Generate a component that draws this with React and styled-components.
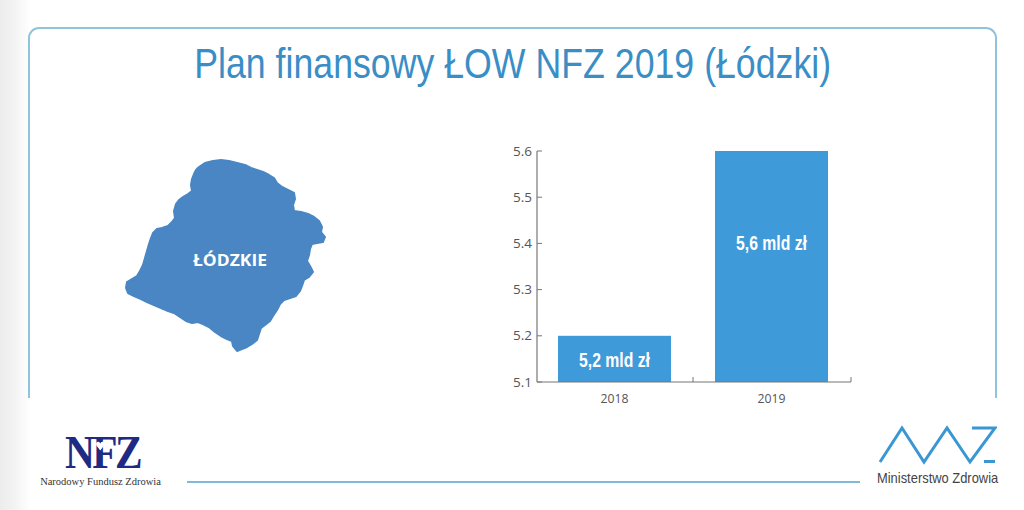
import React from 'react'
import styled, { createGlobalStyle } from 'styled-components'

const GlobalStyle = createGlobalStyle`
  html, body {
    margin: 0;
    padding: 0;
  }
  body {
    background: linear-gradient(to right, #ececec 0px, #f4f4f4 16px, #ffffff 30px);
    font-family: "Liberation Sans", Arial, sans-serif;
  }
`

const bars = [
    { year: '2018', value: 5.2, label: '5,2 mld zł' },
    { year: '2019', value: 5.6, label: '5,6 mld zł' },
]
const ticks = [5.6, 5.5, 5.4, 5.3, 5.2, 5.1]

function Chart() {
    const top = 12
    const bottom = 243
    const axisX = 42
    const scale = (bottom - top) / 0.5
    const yOf = (v) => bottom - (v - 5.1) * scale
    return (
        <ChartSvg width="365" height="272" viewBox="0 0 365 272">
            {ticks.map((t) => (
                <g key={t}>
                    <line x1={axisX} x2={axisX + 5} y1={yOf(t)} y2={yOf(t)} stroke="#777" strokeWidth="1" />
                    <text x="37" y={yOf(t) + 4.5} textAnchor="end" fontSize="12.5" fill="#555" fontFamily="'Open Sans', sans-serif" textLength="19" lengthAdjust="spacingAndGlyphs">
                        {t.toFixed(1)}
                    </text>
                </g>
            ))}
            {bars.map((b, i) => {
                const x = 63 + i * 157
                const y = yOf(b.value)
                const cx = x + 56.5
                const ly = i === 0 ? 228 : 111
                return (
                    <g key={b.year}>
                        <rect x={x} y={y} width="113" height={bottom - y} fill="#3f9ada" />
                        <text x={cx} y={ly} textAnchor="middle" fontSize="19.5" fontWeight="bold" fill="#fff" fontFamily="'Liberation Sans', Arial, sans-serif" textLength="71" lengthAdjust="spacingAndGlyphs">
                            {b.label}
                        </text>
                        <text x={cx} y="264" textAnchor="middle" fontSize="13" fill="#555" fontFamily="'Open Sans', sans-serif" textLength="28" lengthAdjust="spacingAndGlyphs">
                            {b.year}
                        </text>
                    </g>
                )
            })}
            <line x1={axisX} x2={axisX} y1={top} y2={bottom} stroke="#777" strokeWidth="1.2" />
            <line x1={axisX} x2="356" y1={bottom} y2={bottom} stroke="#777" strokeWidth="1.2" />
            <line x1="198" x2="198" y1={bottom - 5} y2={bottom} stroke="#777" strokeWidth="1" />
            <line x1="356" x2="356" y1={bottom - 5} y2={bottom} stroke="#777" strokeWidth="1" />
        </ChartSvg>
    )
}

const mapPath = 'M199,168 L205,164 L213,162 L221,161 L229,162 L237,164 L245,166 L251,169 L257,171 L263,173 L269,176 L274,179 L277,184 L282,188 L288,191 L294,194 L295,200 L293,206 L294,212 L301,213 L308,215 L314,218 L319,222 L322,228 L321,233 L325,238 L323,243 L317,244 L312,245 L310,250 L309,256 L307,262 L310,267 L313,273 L309,278 L304,281 L302,287 L300,292 L296,297 L290,299 L284,301 L280,305 L277,311 L273,317 L270,322 L265,326 L261,329 L259,335 L257,341 L252,345 L247,348 L242,350 L237,352 L233,347 L232,342 L227,340 L221,337 L215,333 L209,328 L203,325 L198,323 L192,324 L186,322 L180,318 L174,314 L168,312 L161,309 L154,306 L147,303 L141,300 L134,297 L128,294 L126,289 L127,283 L132,280 L137,277 L140,272 L143,266 L145,259 L147,252 L149,245 L151,239 L153,234 L157,230 L162,229 L168,227 L172,223 L175,219 L174,212 L176,205 L179,201 L183,198 L188,195 L192,192 L191,186 L192,180 L194,175 L196,171 Z'

function RegionMap() {
    return (
        <MapSvg width="202" height="196" viewBox="125 158 202 196">
            <path d={mapPath} fill="#4a86c4" stroke="#4a86c4" strokeWidth="2" strokeLinejoin="round" />
            <text x="230" y="267" textAnchor="middle" fontSize="15.5" fontWeight="bold" fill="#fff" fontFamily="'Open Sans', sans-serif" textLength="74" lengthAdjust="spacingAndGlyphs">
                ŁÓDZKIE
            </text>
        </MapSvg>
    )
}

function App() {
    return (
        <>
            <GlobalStyle />
            <Page>
                <Card>
                    <TitleRow>
                        <Title>Plan finansowy ŁOW NFZ 2019 (Łódzki)</Title>
                    </TitleRow>
                    <Rule />
                    <Body>
                        <RegionMap />
                        <Chart />
                    </Body>
                </Card>
                <Footer>
                    <NfzLogo>
                        <NfzMark>
                            NFZ
                            <Heart viewBox="0 0 10 9" width="10" height="10">
                                <path d="M5 9 L1 4.5 C-0.5 2.8 0.3 0.3 2.5 0.3 C3.7 0.3 4.5 1.1 5 2 C5.5 1.1 6.3 0.3 7.5 0.3 C9.7 0.3 10.5 2.8 9 4.5 Z" fill="#fff" />
                            </Heart>
                        </NfzMark>
                        <NfzName>Narodowy Fundusz Zdrowia</NfzName>
                    </NfzLogo>
                    <FooterLine />
                    <MzLogo>
                        <svg width="120" height="40" viewBox="0 0 120 40">
                            <polyline points="3,37 25,3 47,37 70,3 93,37 118,3 95,3" fill="none" stroke="#3a97d4" strokeWidth="3" strokeLinejoin="miter" />
                            <line x1="107" y1="36.5" x2="118" y2="36.5" stroke="#3a97d4" strokeWidth="3" />
                        </svg>
                        <MzName>Ministerstwo Zdrowia</MzName>
                    </MzLogo>
                </Footer>
            </Page>
        </>
    )
}

const Page = styled.div`
    width: 1024px;
    height: 510px;
    overflow: hidden;
    display: flex;
    flex-direction: column;
`

const Card = styled.div`
    box-sizing: border-box;
    margin: 27px 27px 0 28px;
    height: 371px;
    flex-shrink: 0;
    border: 2px solid #8fc5dc;
    border-bottom: none;
    border-radius: 11px 11px 0 0;
    background: #fff;
    display: flex;
    flex-direction: column;
`

const TitleRow = styled.div`
    display: flex;
    justify-content: center;
    margin-top: 12px;
`

const Title = styled.h1`
    margin: 0;
    font-family: "Liberation Sans", Arial, sans-serif;
    font-weight: normal;
    font-size: 42px;
    line-height: 46px;
    color: #3a8ec6;
    white-space: nowrap;
    transform: scaleX(0.85);
`

const Rule = styled.div`
    margin: 0 15px 0 20px;
    height: 1px;
    background: #cfcfcf;
`

const Body = styled.div`
    display: flex;
    align-items: flex-start;
`

const MapSvg = styled.svg`
    margin: 70px 0 0 95px;
    flex-shrink: 0;
`

const ChartSvg = styled.svg`
    margin: 52px 0 0 168px;
    flex-shrink: 0;
    overflow: visible;
`

const Footer = styled.div`
    flex: 1;
    display: flex;
    align-items: flex-start;
`

const NfzLogo = styled.div`
    width: 127px;
    margin: 32px 0 0 37px;
    display: flex;
    flex-direction: column;
    align-items: center;
`

const NfzMark = styled.div`
    position: relative;
    font-family: "Liberation Serif", "Times New Roman", serif;
    font-weight: bold;
    font-size: 47px;
    line-height: 44px;
    letter-spacing: -3px;
    color: #1f2a84;
    transform: scaleX(0.88);
    margin-left: 3px;
`

const Heart = styled.svg`
    position: absolute;
    left: 35px;
    top: 11px;
`

const NfzName = styled.div`
    margin-top: 2px;
    font-family: "Liberation Serif", "Times New Roman", serif;
    font-size: 10.5px;
    color: #333;
    white-space: nowrap;
`

const FooterLine = styled.div`
    flex: 1;
    height: 2px;
    margin: 83px 17px 0 23px;
    background: #7fbbd9;
`

const MzLogo = styled.div`
    width: 120px;
    margin: 27px 27px 0 0;
    display: flex;
    flex-direction: column;
    align-items: flex-start;
`

const MzName = styled.div`
    margin-top: 5px;
    font-family: "Liberation Sans", Arial, sans-serif;
    font-size: 14.5px;
    line-height: 16px;
    color: #444;
    white-space: nowrap;
    transform: scaleX(0.89);
    transform-origin: left center;
`

export default App
